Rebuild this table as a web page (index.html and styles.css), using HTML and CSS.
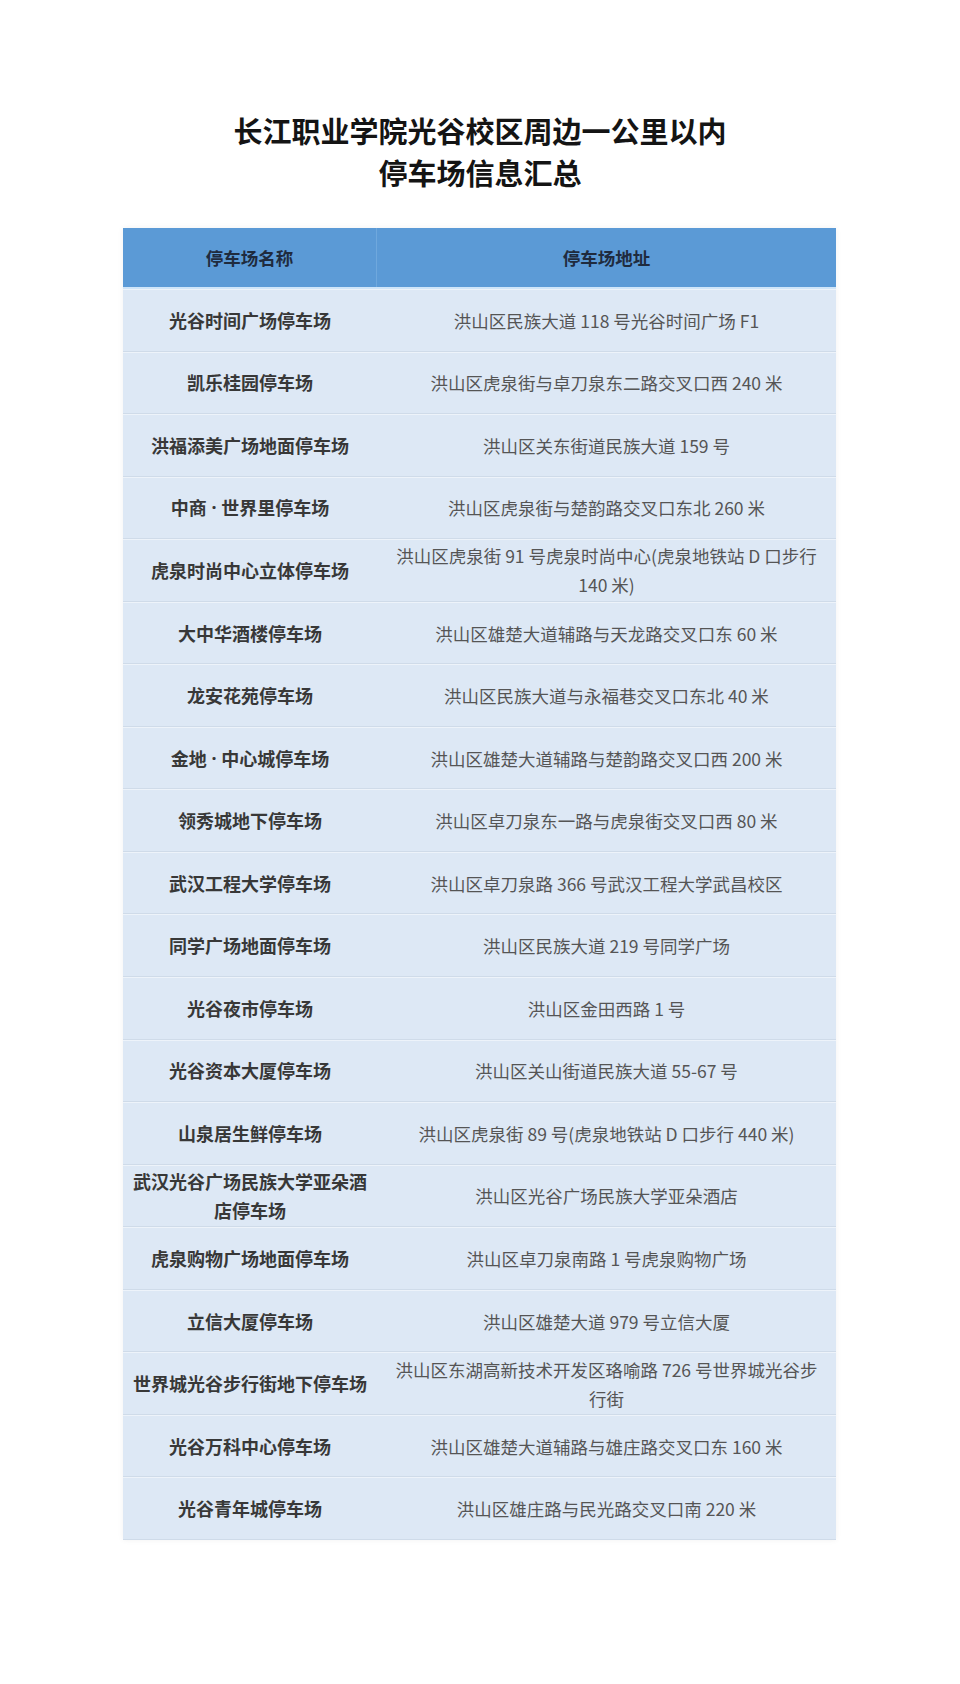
FILE: index.html
```html
<!DOCTYPE html>
<html lang="zh-CN">
<head>
<meta charset="utf-8">
<title>停车场信息汇总</title>
<link rel="stylesheet" href="styles.css">
</head>
<body>
<main class="page">
  <h1 class="title"><span class="title-line">长江职业学院光谷校区周边一公里以内</span><span class="title-line">停车场信息汇总</span></h1>
  <section class="sheet">
    <div class="row head">
      <div class="cell name">停车场名称</div>
      <div class="cell addr">停车场地址</div>
    </div>
    <div class="row"><div class="cell name">光谷时间广场停车场</div><div class="cell addr">洪山区民族大道 118 号光谷时间广场 F1</div></div>
    <div class="row"><div class="cell name">凯乐桂园停车场</div><div class="cell addr">洪山区虎泉街与卓刀泉东二路交叉口西 240 米</div></div>
    <div class="row"><div class="cell name">洪福添美广场地面停车场</div><div class="cell addr">洪山区关东街道民族大道 159 号</div></div>
    <div class="row"><div class="cell name">中商<span class="dot"> · </span>世界里停车场</div><div class="cell addr">洪山区虎泉街与楚韵路交叉口东北 260 米</div></div>
    <div class="row"><div class="cell name">虎泉时尚中心立体停车场</div><div class="cell addr">洪山区虎泉街 91 号虎泉时尚中心(虎泉地铁站 D 口步行<br>140 米)</div></div>
    <div class="row"><div class="cell name">大中华酒楼停车场</div><div class="cell addr">洪山区雄楚大道辅路与天龙路交叉口东 60 米</div></div>
    <div class="row"><div class="cell name">龙安花苑停车场</div><div class="cell addr">洪山区民族大道与永福巷交叉口东北 40 米</div></div>
    <div class="row"><div class="cell name">金地<span class="dot"> · </span>中心城停车场</div><div class="cell addr">洪山区雄楚大道辅路与楚韵路交叉口西 200 米</div></div>
    <div class="row"><div class="cell name">领秀城地下停车场</div><div class="cell addr">洪山区卓刀泉东一路与虎泉街交叉口西 80 米</div></div>
    <div class="row"><div class="cell name">武汉工程大学停车场</div><div class="cell addr">洪山区卓刀泉路 366 号武汉工程大学武昌校区</div></div>
    <div class="row"><div class="cell name">同学广场地面停车场</div><div class="cell addr">洪山区民族大道 219 号同学广场</div></div>
    <div class="row"><div class="cell name">光谷夜市停车场</div><div class="cell addr">洪山区金田西路 1 号</div></div>
    <div class="row"><div class="cell name">光谷资本大厦停车场</div><div class="cell addr">洪山区关山街道民族大道 55-67 号</div></div>
    <div class="row"><div class="cell name">山泉居生鲜停车场</div><div class="cell addr">洪山区虎泉街 89 号(虎泉地铁站 D 口步行 440 米)</div></div>
    <div class="row"><div class="cell name">武汉光谷广场民族大学亚朵酒<br>店停车场</div><div class="cell addr">洪山区光谷广场民族大学亚朵酒店</div></div>
    <div class="row"><div class="cell name">虎泉购物广场地面停车场</div><div class="cell addr">洪山区卓刀泉南路 1 号虎泉购物广场</div></div>
    <div class="row"><div class="cell name">立信大厦停车场</div><div class="cell addr">洪山区雄楚大道 979 号立信大厦</div></div>
    <div class="row"><div class="cell name">世界城光谷步行街地下停车场</div><div class="cell addr">洪山区东湖高新技术开发区珞喻路 726 号世界城光谷步<br>行街</div></div>
    <div class="row"><div class="cell name">光谷万科中心停车场</div><div class="cell addr">洪山区雄楚大道辅路与雄庄路交叉口东 160 米</div></div>
    <div class="row"><div class="cell name">光谷青年城停车场</div><div class="cell addr">洪山区雄庄路与民光路交叉口南 220 米</div></div>
  </section>
</main>
</body>
</html>
```
FILE: styles.css
```css
html, body {
  margin: 0;
  padding: 0;
  background: #ffffff;
}
body {
  font-family: "Noto Sans CJK SC", "Noto Sans", sans-serif;
  color: #333;
}
.page {
  width: 960px;
  min-height: 1684px;
  padding-top: 109px;
  box-sizing: border-box;
}
.title {
  margin: 0;
  display: flex;
  flex-direction: column;
  align-items: center;
  font-size: 29px;
  line-height: 42px;
  font-weight: 700;
  color: #141414;
}
.title-line {
  display: block;
  height: 42px;
}
.sheet {
  width: 713px;
  margin: 35px 0 0 123px;
  display: flex;
  flex-direction: column;
  background: #dde8f5;
  box-shadow: 0 0 6px rgba(0, 0, 0, 0.06);
}
.row {
  display: grid;
  grid-template-columns: 254px 1fr;
  height: 62.55px;
  box-sizing: border-box;
  border-top: 1px solid #edf3fa;
  border-bottom: 1px solid #cfdbe9;
}
.row.head {
  height: 61px;
  background: #5b9ad6;
  border-top: none;
  border-bottom: 2px solid #cfe5f9;
}
.cell {
  display: flex;
  align-items: center;
  justify-content: center;
  text-align: center;
  line-height: 29px;
  padding: 0 6px;
}
.head .cell {
  font-weight: 700;
  font-size: 17.5px;
  color: #1f2b3e;
}
.head .name {
  border-right: 1px solid #6fa8dd;
}
.name {
  font-size: 18px;
  font-weight: 700;
  color: #383838;
}
.addr {
  font-size: 17.5px;
  color: #555;
  font-weight: 400;
}
.dot {
  font-family: "Noto Sans", sans-serif;
  white-space: pre;
}
```
